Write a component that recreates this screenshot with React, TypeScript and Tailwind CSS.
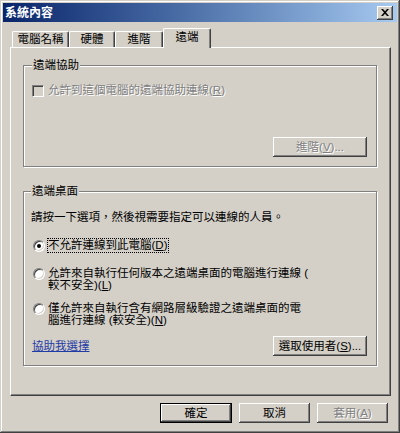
import type { ReactNode } from 'react';

const FONT = "font-['Liberation_Sans','Noto_Sans_CJK_TC',sans-serif]";
const DISABLED = 'text-[#808080] [text-shadow:1px_1px_0_#ffffff]';

function Button({
  children,
  className = '',
  disabled,
  primary,
}: {
  children: ReactNode;
  className?: string;
  disabled?: boolean;
  primary?: boolean;
}) {
  return (
    <button
      className={`h-[20px] flex items-center justify-center bg-[#d4d0c8] leading-[13px] ${className} ${
        primary
          ? 'border border-black shadow-[inset_-1px_-1px_0_#404040,inset_1px_1px_0_#ffffff,inset_-2px_-2px_0_#808080]'
          : 'shadow-[inset_-1px_-1px_0_#404040,inset_1px_1px_0_#ffffff,inset_-2px_-2px_0_#808080,inset_2px_2px_0_#d4d0c8]'
      } ${disabled ? DISABLED : 'text-black'}`}
    >
      {children}
    </button>
  );
}

function Radio({ checked }: { checked?: boolean }) {
  return (
    <span className="w-[12px] h-[12px] shrink-0 rounded-full bg-white border border-t-[#808080] border-l-[#808080] border-r-white border-b-white shadow-[inset_1px_1px_0_#404040,inset_-1px_-1px_0_#d4d0c8] flex items-center justify-center">
      {checked && <span className="w-[4px] h-[4px] rounded-full bg-black" />}
    </span>
  );
}

function Tab({ label, className, selected }: { label: string; className: string; selected?: boolean }) {
  return (
    <div
      className={`${className} bg-[#d4d0c8] border-t border-l border-white border-r border-r-[#404040] rounded-t-[2px] shadow-[inset_-1px_0_0_#808080] text-center ${
        selected ? 'h-[20px] pt-[2px]' : 'h-[16px] mb-[1px] pt-[1px]'
      }`}
    >
      {label}
    </div>
  );
}

export default function App() {
  return (
    <div
      className={`w-[400px] h-[433px] bg-[#d4d0c8] p-[3px] flex flex-col text-[11.5px] leading-[13px] text-black ${FONT} shadow-[inset_-1px_-1px_0_#404040,inset_1px_1px_0_#d4d0c8,inset_-2px_-2px_0_#808080,inset_2px_2px_0_#ffffff]`}
    >
      {/* Title bar */}
      <div className="h-[19px] shrink-0 flex items-center justify-between pl-[2px] pr-[4px] bg-linear-to-r from-[#0a246a] to-[#a6caf0]">
        <span className="text-white font-bold text-[12px] leading-[14px]">系統內容</span>
        <button className="w-[16px] h-[14px] flex items-center justify-center bg-[#d4d0c8] shadow-[inset_-1px_-1px_0_#404040,inset_1px_1px_0_#ffffff,inset_-2px_-2px_0_#808080]">
          <svg width="8" height="7" viewBox="0 0 8 7">
            <path d="M0 0h2l2 2.2L6 0h2L5 3.5 8 7H6L4 4.8 2 7H0l3-3.5z" fill="#000" />
          </svg>
        </button>
      </div>

      <div className="flex-1 flex flex-col pl-[7px] pr-[6px]">
        {/* Tabs */}
        <div className="mt-[6px] h-[20px] -mb-px relative z-10 flex items-end pl-[2px]">
          <Tab label="電腦名稱" className="w-[57px]" />
          <Tab label="硬體" className="w-[46px]" />
          <Tab label="進階" className="w-[48px]" />
          <Tab label="遠端" className="w-[48px]" selected />
        </div>

        {/* Tab panel */}
        <div className="h-[349px] shrink-0 flex flex-col pt-[10px] pl-[12px] pr-[13px] border-t border-l border-white border-r border-b border-r-[#404040] border-b-[#404040] shadow-[inset_-1px_-1px_0_#808080]">
          <fieldset className="flex flex-col pl-[8px] pr-[9px] pb-[9px] border border-[#808080] shadow-[1px_1px_0_#ffffff,inset_1px_1px_0_#ffffff]">
            <legend className="px-[1px] leading-[14px] bg-[#d4d0c8]">遠端協助</legend>
            <div className="mt-[12px] flex items-center gap-[4px]">
              <span className="w-[12px] h-[12px] shrink-0 border border-t-[#808080] border-l-[#808080] border-r-white border-b-white bg-[#d4d0c8] shadow-[inset_1px_1px_0_#404040,inset_-1px_-1px_0_#d4d0c8]" />
              <span className={DISABLED}>
                允許到這個電腦的遠端協助連線(<u>R</u>)
              </span>
            </div>
            <div className="mt-[40px] flex justify-end">
              <Button className="w-[94px]" disabled>
                進階(<u>V</u>)...
              </Button>
            </div>
          </fieldset>

          <fieldset className="mt-[17px] flex flex-col pl-[7px] pr-[9px] pb-[9px] border border-[#808080] shadow-[1px_1px_0_#ffffff,inset_1px_1px_0_#ffffff]">
            <legend className="px-[1px] leading-[14px] bg-[#d4d0c8]">遠端桌面</legend>
            <p className="mt-[13px]">請按一下選項，然後視需要指定可以連線的人員。</p>

            <div className="mt-[14px] ml-[2px] flex items-center">
              <Radio checked />
              <span className="ml-[2px] border border-dotted border-black">
                不允許連線到此電腦(<u>D</u>)
              </span>
            </div>

            <div className="mt-[14px] ml-[2px] flex items-start">
              <span className="mt-[1px]">
                <Radio />
              </span>
              <span className="ml-[3px] leading-[12px]">
                允許來自執行任何版本之遠端桌面的電腦進行連線 (
                <br />
                較不安全)(<u>L</u>)
              </span>
            </div>

            <div className="mt-[11px] ml-[2px] flex items-start">
              <span className="mt-[1px]">
                <Radio />
              </span>
              <span className="ml-[3px] leading-[12px]">
                僅允許來自執行含有網路層級驗證之遠端桌面的電
                <br />
                腦進行連線 (較安全)(<u>N</u>)
              </span>
            </div>

            <div className="mt-[10px] flex items-center justify-between">
              <a className="ml-[1px] text-[#1f3ca6] underline cursor-pointer">協助我選擇</a>
              <Button className="w-[94px]">
                選取使用者(<u>S</u>)...
              </Button>
            </div>
          </fieldset>
        </div>

        {/* Dialog buttons */}
        <div className="mt-[7px] flex justify-end gap-[7px] pr-[3px]">
          <Button className="w-[72px]" primary>
            確定
          </Button>
          <Button className="w-[71px]">取消</Button>
          <Button className="w-[71px]" disabled>
            套用(<u>A</u>)
          </Button>
        </div>
      </div>
    </div>
  );
}
